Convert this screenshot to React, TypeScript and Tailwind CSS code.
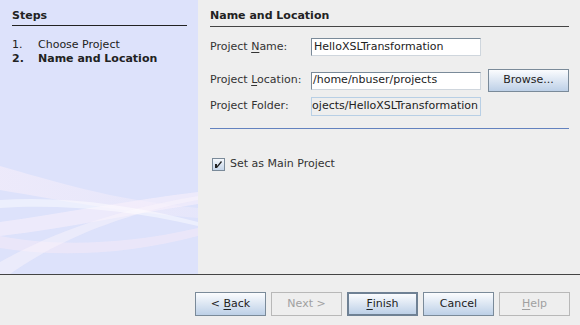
import React from 'react';

const font = { fontFamily: '"DejaVu Sans", "Liberation Sans", sans-serif' };

function Mn({ text, at }: { text: string; at: number }) {
  return (
    <>
      {text.slice(0, at)}
      <span className="underline underline-offset-2">{text[at]}</span>
      {text.slice(at + 1)}
    </>
  );
}

function Btn({ children, disabled, focused }: { children: React.ReactNode; disabled?: boolean; focused?: boolean }) {
  let cls = 'w-[71px] h-[24px] flex items-center justify-center text-[11px] ';
  if (disabled) cls += 'border border-[#b8b8b8] bg-[#eeeeee] text-[#a0a0a0]';
  else if (focused) cls += 'border-2 border-[#6f8194] bg-gradient-to-b from-[#fbfcfe] to-[#bdd0e7] text-[#222]';
  else cls += 'border border-[#7a8a99] bg-gradient-to-b from-[#fbfcfe] to-[#bdd0e7] text-[#222]';
  return <div className={cls}>{children}</div>;
}

function Waves() {
  return (
    <svg className="absolute inset-0" width="198" height="274" viewBox="0 0 198 274">
      <defs>
        <linearGradient id="w1" x1="0" y1="0" x2="1" y2="0">
          <stop offset="0" stopColor="#f6eefa" stopOpacity="0.9" />
          <stop offset="1" stopColor="#f6eefa" stopOpacity="0.5" />
        </linearGradient>
      </defs>
      <path d="M0 166 C 50 180, 110 200, 198 208 L 198 218 C 120 212, 60 200, 0 190 Z" fill="url(#w1)" opacity="0.7" />
      <path d="M0 222 C 60 214, 130 200, 198 192 L 198 204 C 130 214, 70 228, 0 236 Z" fill="#f8f0fb" opacity="0.6" />
      <path d="M0 236 C 50 246, 120 246, 198 228 L 198 236 C 130 254, 60 258, 0 248 Z" fill="#f3eaf8" opacity="0.6" />
      <path d="M0 262 C 40 240, 100 212, 198 196 L 198 200 C 110 216, 50 246, 10 274 L 0 274 Z" fill="#faf4fc" opacity="0.5" />
      <path d="M0 200 C 60 196, 130 204, 198 222 L 198 226 C 130 210, 60 204, 0 208 Z" fill="#ffffff" opacity="0.45" />
    </svg>
  );
}

export default function App() {
  return (
    <div className="w-[580px] h-[325px] bg-[#eeeeee] text-[#333] text-[11px] flex flex-col overflow-hidden" style={font}>
      <div className="flex h-[274px]">
        <div className="relative w-[198px] bg-[#dde2fb]">
          <Waves />
          <div className="relative px-[12px]">
            <div className="h-[26px] flex items-end pb-[2px] font-bold text-[#222] w-[175px] border-b border-[#222] leading-[14px]">Steps</div>
            <div className="mt-[12px] leading-[14px] text-[#222]">
              <div className="flex"><span className="w-[26px]">1.</span><span>Choose Project</span></div>
              <div className="flex font-bold"><span className="w-[26px]">2.</span><span>Name and Location</span></div>
            </div>
          </div>
        </div>
        <div className="flex-1 pl-[12px] pr-[11px]">
          <div className="h-[27px] flex items-end pb-[3px] font-bold text-[#222] border-b border-[#444] leading-[14px]">Name and Location</div>
          <div className="mt-[11px] flex items-center h-[18px]">
            <div className="w-[101px]"><Mn text="Project Name:" at={8} /></div>
            <div className="w-[170px] h-[18px] border border-[#7a8a99] border-r-[#cfd6dd] border-b-[#cfd6dd] bg-white flex items-center pl-[2px] text-[#222]">HelloXSLTransformation</div>
          </div>
          <div className="mt-[13px] flex items-center h-[23px]">
            <div className="w-[101px]"><Mn text="Project Location:" at={8} /></div>
            <div className="w-[170px] h-[18px] border border-[#7a8a99] border-r-[#cfd6dd] border-b-[#cfd6dd] bg-white flex items-center pl-[1px] text-[#222]">/home/nbuser/projects</div>
            <div className="ml-[7px] w-[81px] h-[23px] border border-[#7a8a99] bg-gradient-to-b from-[#fbfcfe] to-[#bdd0e7] flex items-center justify-center text-[#222]">Browse...</div>
          </div>
          <div className="mt-[5px] flex items-center h-[19px]">
            <div className="w-[101px]">Project Folder:</div>
            <div className="w-[170px] h-[19px] border border-[#b8cfe5] bg-[#eeeeee] flex items-center justify-end pr-[2px] text-[#222] whitespace-nowrap">ojects/HelloXSLTransformation</div>
          </div>
          <div className="mt-[12px] h-px bg-[#6382bf]" />
          <div className="mt-[28px] flex items-center h-[14px] pl-[2px]">
            <div className="w-[13px] h-[13px] border border-[#7a8a99] bg-gradient-to-b from-[#f4f7fb] to-[#c4d4e8] flex items-center justify-center">
              <svg width="9" height="9" viewBox="0 0 9 9"><path d="M1 4 L1 8 L3 8 L8 2 L7 1 L3 6 L3 4 Z" fill="#222" /></svg>
            </div>
            <span className="ml-[5px]">Set as Main Project</span>
          </div>
        </div>
      </div>
      <div className="h-px bg-[#444]" />
      <div className="flex justify-end gap-[5px] pt-[17px] pr-[10px]">
        <Btn><span>&lt;&nbsp;</span><Mn text="Back" at={0} /></Btn>
        <Btn disabled>Next &gt;</Btn>
        <Btn focused><Mn text="Finish" at={0} /></Btn>
        <Btn>Cancel</Btn>
        <Btn disabled><Mn text="Help" at={0} /></Btn>
      </div>
    </div>
  );
}
